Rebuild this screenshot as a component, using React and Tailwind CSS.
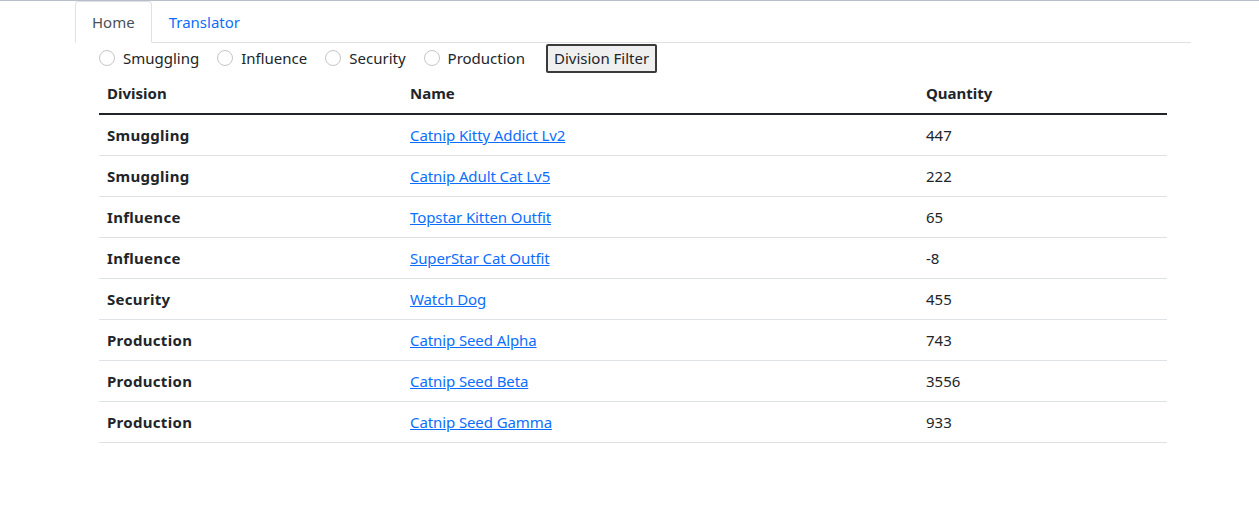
import React, { useState } from 'react';

const rows = [
  { division: 'Smuggling', name: 'Catnip Kitty Addict Lv2', qty: 447 },
  { division: 'Smuggling', name: 'Catnip Adult Cat Lv5', qty: 222 },
  { division: 'Influence', name: 'Topstar Kitten Outfit', qty: 65 },
  { division: 'Influence', name: 'SuperStar Cat Outfit', qty: -8 },
  { division: 'Security', name: 'Watch Dog', qty: 455 },
  { division: 'Production', name: 'Catnip Seed Alpha', qty: 743 },
  { division: 'Production', name: 'Catnip Seed Beta', qty: 3556 },
  { division: 'Production', name: 'Catnip Seed Gamma', qty: 933 },
];

const divisions = ['Smuggling', 'Influence', 'Security', 'Production'];

const App = () => {
  const [tab, setTab] = useState('Home');
  const [picked, setPicked] = useState(null);

  return (
    <div
      className="min-h-[530px] bg-white border-t border-[#b9bdc9] text-[#212529] text-[15px] leading-6"
      style={{ fontFamily: '"Noto Sans", "Open Sans", Arial, sans-serif' }}
    >
      <div className="w-[1116px] ml-[75px]">
        <ul className="flex border-b border-[#dee2e6]">
          {['Home', 'Translator'].map((t) => (
            <li key={t} className="-mb-px">
              <button
                onClick={() => setTab(t)}
                className={
                  tab === t
                    ? 'h-[42px] px-4 border border-[#dee2e6] border-b-white rounded-t-[4px] bg-white text-[#495057]'
                    : 'h-[42px] px-4 border border-transparent text-[#0d6efd]'
                }
              >
                {t}
              </button>
            </li>
          ))}
        </ul>

        <div className="px-6">
          <div className="flex items-center h-[30px]">
            {divisions.map((d) => (
              <label
                key={d}
                className="flex items-center mr-[18px] cursor-pointer"
                onClick={() => setPicked(d)}
              >
                <span className="w-4 h-4 rounded-full border border-[#c6c6c6] bg-white flex items-center justify-center">
                  {picked === d && <span className="w-2 h-2 rounded-full bg-[#0d6efd]" />}
                </span>
                <span className="ml-2">{d}</span>
              </label>
            ))}
            <button className="ml-[3px] h-[29px] px-[6px] border-2 border-[#3a3a3a] bg-[#efefef] rounded-[2px] leading-none">
              Division Filter
            </button>
          </div>

          <table className="w-[1068px] table-fixed border-collapse">
            <colgroup>
              <col className="w-[303px]" />
              <col className="w-[516px]" />
              <col className="w-[249px]" />
            </colgroup>
            <thead>
              <tr className="border-b-2 border-[#212529]">
                <th className="text-left font-bold px-2 py-2">Division</th>
                <th className="text-left font-bold px-2 py-2">Name</th>
                <th className="text-left font-bold px-2 py-2">Quantity</th>
              </tr>
            </thead>
            <tbody>
              {rows.map((r) => (
                <tr key={r.name} className="border-b border-[#dee2e6]">
                  <th className="text-left font-bold px-2 py-2 tracking-[0.3px]">{r.division}</th>
                  <td className="px-2 py-2">
                    <a href="#" className="text-[#0d6efd] underline tracking-[-0.1px]">
                      {r.name}
                    </a>
                  </td>
                  <td className="px-2 py-2">{r.qty}</td>
                </tr>
              ))}
            </tbody>
          </table>
        </div>
      </div>
    </div>
  );
};

export default App;
